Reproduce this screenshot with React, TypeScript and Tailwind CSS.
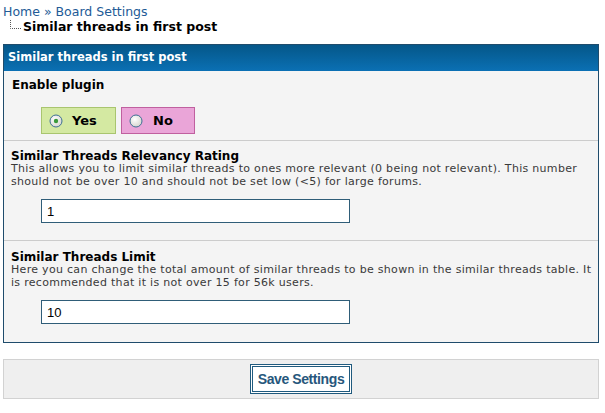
import React, { useState } from 'react';

const font = "font-['DejaVu_Sans',Verdana,sans-serif]";

function Radio({ checked }: { checked: boolean }) {
  return (
    <svg width="14" height="14" viewBox="0 0 14 14" className="shrink-0">
      <defs>
        <radialGradient id="rg" cx="40%" cy="35%" r="70%">
          <stop offset="0%" stopColor="#ffffff" />
          <stop offset="100%" stopColor="#d4d4cc" />
        </radialGradient>
      </defs>
      <circle cx="7" cy="7" r="6" fill="url(#rg)" stroke="#3d6f94" strokeWidth="1" />
      {checked && <circle cx="7" cy="7" r="2.2" fill="#3a9a3a" />}
    </svg>
  );
}

export default function App() {
  const [enabled, setEnabled] = useState(true);
  const [rating, setRating] = useState('1');
  const [limit, setLimit] = useState('10');

  return (
    <div className={`w-[605px] h-[413px] bg-white ${font} text-black`}>
      {/* Breadcrumb */}
      <div className="pl-[3px] pt-[4px]">
        <div className="text-[12.5px] leading-[16px] text-[#225a96]">
          <span>Home</span> <span>»</span> <span>Board Settings</span>
        </div>
        <div className="flex items-start">
          <svg width="12" height="10" viewBox="0 0 12 10" className="ml-[6px] mr-[2px] shrink-0">
            <path d="M1.5 0 V8.5 H12" stroke="#555" strokeWidth="1" strokeDasharray="1 1" fill="none" />
          </svg>
          <span className="text-[12.5px] leading-[14px] font-bold">Similar threads in first post</span>
        </div>
      </div>

      {/* Settings panel */}
      <div className="mx-[3px] mt-[10px] w-[596px] border border-[#1f4c6c] bg-[#f4f4f4]">
        <div className="h-[26px] flex items-center px-[4px] bg-gradient-to-b from-[#055789] to-[#0b70b4] text-white text-[11.5px] font-bold">
          Similar threads in first post
        </div>

        <div className="px-[8px] pt-[7px] pb-[6px] border-b border-[#cccccc]">
          <div className="text-[12px] font-bold leading-[15px]">Enable plugin</div>
          <div className="flex gap-[5px] pl-[29px] pt-[14px]">
            <label
              onClick={() => setEnabled(true)}
              className="w-[75px] h-[27px] flex items-center gap-[9px] pl-[7px] bg-[#d4e9a2] border border-[#a9c56f] text-[13px] font-bold cursor-pointer"
            >
              <Radio checked={enabled} />
              Yes
            </label>
            <label
              onClick={() => setEnabled(false)}
              className="w-[74px] h-[27px] flex items-center gap-[10px] pl-[7px] bg-[#eaa5d8] border border-[#c0609f] text-[13px] font-bold cursor-pointer"
            >
              <Radio checked={!enabled} />
              No
            </label>
          </div>
        </div>

        <div className="pl-[7px] pr-[2px] pt-[9px] pb-[17px] border-b border-[#cccccc]">
          <div className="text-[12px] font-bold leading-[12px]">Similar Threads Relevancy Rating</div>
          <p className="text-[11px] leading-[13px] tracking-[0.3px] text-[#3a3a3a]">
            This allows you to limit similar threads to ones more relevant (0 being not relevant). This number
            <br />
            should not be over 10 and should not be set low (&lt;5) for large forums.
          </p>
          <input
            value={rating}
            onChange={e => setRating(e.target.value)}
            className="block mt-[11px] ml-[30px] w-[309px] h-[24px] px-[5px] border border-[#2f5d78] bg-white text-[13px] font-['Liberation_Sans',Arial,sans-serif] outline-none"
          />
        </div>

        <div className="pl-[7px] pr-[2px] pt-[10px] pb-[18px]">
          <div className="text-[12px] font-bold leading-[12px]">Similar Threads Limit</div>
          <p className="text-[11px] leading-[13px] tracking-[0.3px] text-[#3a3a3a]">
            Here you can change the total amount of similar threads to be shown in the similar threads table. It
            <br />
            is recommended that it is not over 15 for 56k users.
          </p>
          <input
            value={limit}
            onChange={e => setLimit(e.target.value)}
            className="block mt-[11px] ml-[30px] w-[309px] h-[24px] px-[5px] border border-[#2f5d78] bg-white text-[13px] font-['Liberation_Sans',Arial,sans-serif] outline-none"
          />
        </div>
      </div>

      {/* Save bar */}
      <div className="mx-[3px] mt-[16px] w-[596px] h-[40px] flex items-center justify-center border border-[#d2d2d2] bg-[#efefef]">
        <button className="h-[30px] px-[5px] border-[3px] border-double border-[#1f5a7e] bg-white text-[#27577c] text-[14px] tracking-[-0.4px] font-bold font-['Liberation_Sans',Arial,sans-serif]">
          Save Settings
        </button>
      </div>
    </div>
  );
}
